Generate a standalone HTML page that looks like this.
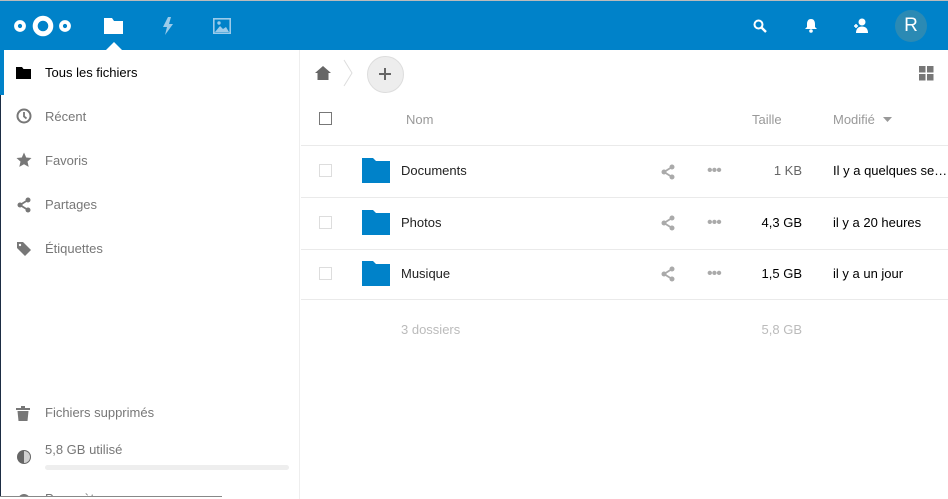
<!DOCTYPE html>
<html style="width:948px;height:499px;overflow:hidden"><head><meta charset="utf-8"><style>
*{margin:0;padding:0;box-sizing:border-box}
body{width:948px;height:499px;overflow:hidden;background:#fff;font-family:"Liberation Sans",sans-serif;font-size:13px;position:relative;color:#222}
.a{position:absolute}
#hdr{left:0;top:0;width:948px;height:50px;background:#0082c9;border-top:1px solid #bbb}
.nav{left:0;top:50px;width:300px;height:449px;border-right:1px solid #eee;overflow:hidden}
.ni{position:absolute;left:45px;color:#777;font-size:13px}
.ic{position:absolute;left:16px}
.row{position:absolute;left:301px;width:647px;height:52px;border-bottom:1px solid #eaeaea}
.gray{color:#999}
</style></head><body>
<div id="hdr" class="a">
 <svg class="a" style="left:13px;top:12px" width="62" height="26" viewBox="0 0 62 26">
  <circle cx="30" cy="13" r="7.8" fill="none" stroke="#fff" stroke-width="5"/>
  <circle cx="7" cy="13" r="4" fill="none" stroke="#fff" stroke-width="3.8"/>
  <circle cx="52" cy="13" r="4" fill="none" stroke="#fff" stroke-width="3.8"/>
 </svg>
 <svg class="a" style="left:104px;top:17px" width="20" height="16" viewBox="0 0 20 16"><path d="M0 0h8l2 3h9v13H0z" fill="#fff"/></svg>
 <svg class="a" style="left:105px;top:41px" width="18" height="9"><path d="M0 9L9 0l9 9z" fill="#fff"/></svg>
 <svg class="a" style="left:162px;top:16px" width="12" height="18" viewBox="0 0 12 18"><path d="M6 0L1 10h4l-2 8 8-11H7l2-7z" fill="#9ccbea"/></svg>
 <svg class="a" style="left:213px;top:17px" width="18" height="16" viewBox="0 0 18 16"><rect x="0.8" y="0.8" width="16.4" height="14.4" fill="none" stroke="#9ccbea" stroke-width="1.6"/><path d="M2 14l5-6 3 3 3-2 3 5z" fill="#9ccbea"/><circle cx="6" cy="5" r="1.7" fill="#9ccbea"/></svg>
 <svg class="a" style="left:753px;top:18px" width="14" height="14" viewBox="0 0 14 14"><circle cx="5.5" cy="5.5" r="4" fill="none" stroke="#fff" stroke-width="2"/><path d="M8.5 8.5l4.5 4.5" stroke="#fff" stroke-width="2.4"/></svg>
 <svg class="a" style="left:805px;top:17px" width="12" height="15" viewBox="0 0 12 15"><path d="M6 1c3 0 4 2.5 4 5v3l2 2H0l2-2V6c0-2.5 1-5 4-5z" fill="#fff"/><circle cx="6" cy="13" r="1.8" fill="#fff"/></svg>
 <svg class="a" style="left:853px;top:16px" width="16" height="16" viewBox="0 0 16 16"><circle cx="9" cy="5" r="3.5" fill="#fff"/><path d="M3 16c0-5 3-6.5 6-6.5s6 1.5 6 6.5z" fill="#fff"/><path d="M1 9h4M3 7v4" stroke="#fff" stroke-width="1.5"/></svg>
 <div class="a" style="left:895px;top:9px;width:32px;height:32px;border-radius:50%;background:#2b8ab4;color:#fff;font-size:19px;text-align:center;line-height:32px">R</div>
</div>
<div class="a nav">
 <div class="a" style="left:0;top:0;width:4px;height:45px;background:#0082c9"></div>
 <div class="a" style="left:0;top:45px;width:1px;height:404px;background:#1d2d44"></div>
 <svg class="ic" style="top:17px" width="15" height="12" viewBox="0 0 15 12"><path d="M0 0h6l1.5 2H15v10H0z" fill="#000"/></svg>
 <div class="ni" style="top:15px;color:#000">Tous les fichiers</div>
 <svg class="ic" style="top:58px" width="16" height="16" viewBox="0 0 16 16"><circle cx="8" cy="8" r="6.5" fill="none" stroke="#777" stroke-width="2"/><path d="M8 4v4.5l2.5 2" stroke="#777" stroke-width="1.8" fill="none"/></svg>
 <div class="ni" style="top:59px">Récent</div>
 <svg class="ic" style="top:102px" width="16" height="16" viewBox="0 0 16 16"><path d="M8 0.5l2.2 5 5.3.5-4 3.6 1.2 5.3L8 12.2 3.3 14.9l1.2-5.3-4-3.6 5.3-.5z" fill="#777"/></svg>
 <div class="ni" style="top:103px">Favoris</div>
 <svg class="ic" style="top:147px" width="16" height="16" viewBox="0 0 16 16"><circle cx="12" cy="3" r="2.5" fill="#777"/><circle cx="12" cy="13" r="2.5" fill="#777"/><circle cx="4" cy="8" r="2.5" fill="#777"/><path d="M12 3L4 8l8 5" stroke="#777" stroke-width="1.8" fill="none"/></svg>
 <div class="ni" style="top:147px">Partages</div>
 <svg class="ic" style="top:191px" width="16" height="16" viewBox="0 0 16 16"><path d="M1 1h6l8 8-6 6-8-8z" fill="#777"/><circle cx="4" cy="4" r="1.2" fill="#fff"/></svg>
 <div class="ni" style="top:191px">Étiquettes</div>
 <svg class="ic" style="top:356px" width="14" height="15" viewBox="0 0 14 15"><path d="M0 2h14v2H0zM5 0h4v2H5zM1.5 5h11l-1 10h-9z" fill="#777"/></svg>
 <div class="ni" style="top:355px">Fichiers supprimés</div>
 <svg class="ic" style="top:399px" width="16" height="16" viewBox="0 0 16 16"><circle cx="8" cy="8" r="7" fill="#666"/><path d="M8 2a6 6 0 0 1 0 12z" fill="#fff" opacity=".7"/></svg>
 <div class="ni" style="top:392px">5,8 GB utilisé</div>
 <div class="a" style="left:45px;top:415px;width:244px;height:5px;border-radius:3px;background:#eee"></div>
 <div class="ni" style="top:441px">Paramètres</div>
 <svg class="ic" style="top:442px" width="16" height="16" viewBox="0 0 16 16"><circle cx="8" cy="8" r="6" fill="#777"/></svg>
 <div class="a" style="left:0;top:446px;width:222px;height:3px;background:#fff;border-top:1px solid #888"></div>
</div>
<svg class="a" style="left:315px;top:66px" width="16" height="14" viewBox="0 0 16 14"><path d="M8 0l8 7h-2.5v7h-11V7H0z" fill="#666"/></svg>
<svg class="a" style="left:343px;top:59px" width="10" height="28"><path d="M1 1l8 13-8 13" fill="none" stroke="#ddd"/></svg>
<div class="a" style="left:367px;top:56px;width:37px;height:37px;border-radius:50%;background:#ededed;border:1px solid #ddd"></div>
<svg class="a" style="left:378px;top:67px" width="14" height="14"><path d="M7 1v12M1 7h12" stroke="#666" stroke-width="2"/></svg>
<svg class="a" style="left:919px;top:66px" width="15" height="15"><rect x="0" y="0" width="6.5" height="6.5" fill="#777"/><rect x="8" y="0" width="6.5" height="6.5" fill="#777"/><rect x="0" y="8" width="6.5" height="6.5" fill="#777"/><rect x="8" y="8" width="6.5" height="6.5" fill="#777"/></svg>
<div class="row" style="top:94px;height:52px"></div>
<div class="a" style="left:319px;top:112px;width:13px;height:13px;border:1px solid #777"></div>
<div class="a gray" style="left:406px;top:112px">Nom</div>
<div class="a gray" style="left:752px;top:112px">Taille</div>
<div class="a gray" style="left:833px;top:112px">Modifié</div>
<svg class="a" style="left:883px;top:117px" width="9" height="5"><path d="M0 0h9L4.5 5z" fill="#999"/></svg>
<div class="row" style="top:146px"></div>
<div class="row" style="top:198px"></div>
<div class="row" style="top:249px;height:51px"></div>
<div class="a" style="left:319px;top:164px;width:13px;height:13px;border:1px solid #ddd"></div>
<div class="a" style="left:319px;top:216px;width:13px;height:13px;border:1px solid #ddd"></div>
<div class="a" style="left:319px;top:267px;width:13px;height:13px;border:1px solid #ddd"></div>
<svg class="a" style="left:362px;top:158px" width="28" height="25" viewBox="0 0 28 25"><path d="M0 0h11l3 3h14v22H0z" fill="#0082c9"/></svg>
<svg class="a" style="left:362px;top:210px" width="28" height="25" viewBox="0 0 28 25"><path d="M0 0h11l3 3h14v22H0z" fill="#0082c9"/></svg>
<svg class="a" style="left:362px;top:261px" width="28" height="25" viewBox="0 0 28 25"><path d="M0 0h11l3 3h14v22H0z" fill="#0082c9"/></svg>
<div class="a" style="left:401px;top:163px">Documents</div>
<div class="a" style="left:401px;top:215px">Photos</div>
<div class="a" style="left:401px;top:266px">Musique</div>
<svg class="a" style="left:660px;top:164px" width="16" height="16" viewBox="0 0 16 16"><circle cx="12" cy="3" r="2.5" fill="#aaa"/><circle cx="12" cy="13" r="2.5" fill="#aaa"/><circle cx="4" cy="8" r="2.5" fill="#aaa"/><path d="M12 3L4 8l8 5" stroke="#aaa" stroke-width="1.8" fill="none"/></svg>
<svg class="a" style="left:660px;top:215px" width="16" height="16" viewBox="0 0 16 16"><circle cx="12" cy="3" r="2.5" fill="#aaa"/><circle cx="12" cy="13" r="2.5" fill="#aaa"/><circle cx="4" cy="8" r="2.5" fill="#aaa"/><path d="M12 3L4 8l8 5" stroke="#aaa" stroke-width="1.8" fill="none"/></svg>
<svg class="a" style="left:660px;top:266px" width="16" height="16" viewBox="0 0 16 16"><circle cx="12" cy="3" r="2.5" fill="#aaa"/><circle cx="12" cy="13" r="2.5" fill="#aaa"/><circle cx="4" cy="8" r="2.5" fill="#aaa"/><path d="M12 3L4 8l8 5" stroke="#aaa" stroke-width="1.8" fill="none"/></svg>
<div class="a" style="left:707px;top:162px;color:#aaa;font-size:16px;letter-spacing:-1px">•••</div>
<div class="a" style="left:707px;top:214px;color:#aaa;font-size:16px;letter-spacing:-1px">•••</div>
<div class="a" style="left:707px;top:265px;color:#aaa;font-size:16px;letter-spacing:-1px">•••</div>
<div class="a" style="right:146px;top:163px;color:#666">1 KB</div>
<div class="a" style="right:146px;top:215px;color:#000">4,3 GB</div>
<div class="a" style="right:146px;top:266px;color:#000">1,5 GB</div>
<div class="a" style="left:833px;top:163px;color:#000">Il y a quelques se…</div>
<div class="a" style="left:833px;top:215px;color:#000">il y a 20 heures</div>
<div class="a" style="left:833px;top:266px;color:#000">il y a un jour</div>
<div class="a" style="left:401px;top:322px;color:#bbb">3 dossiers</div>
<div class="a" style="right:146px;top:322px;color:#bbb">5,8 GB</div>
</body></html>
